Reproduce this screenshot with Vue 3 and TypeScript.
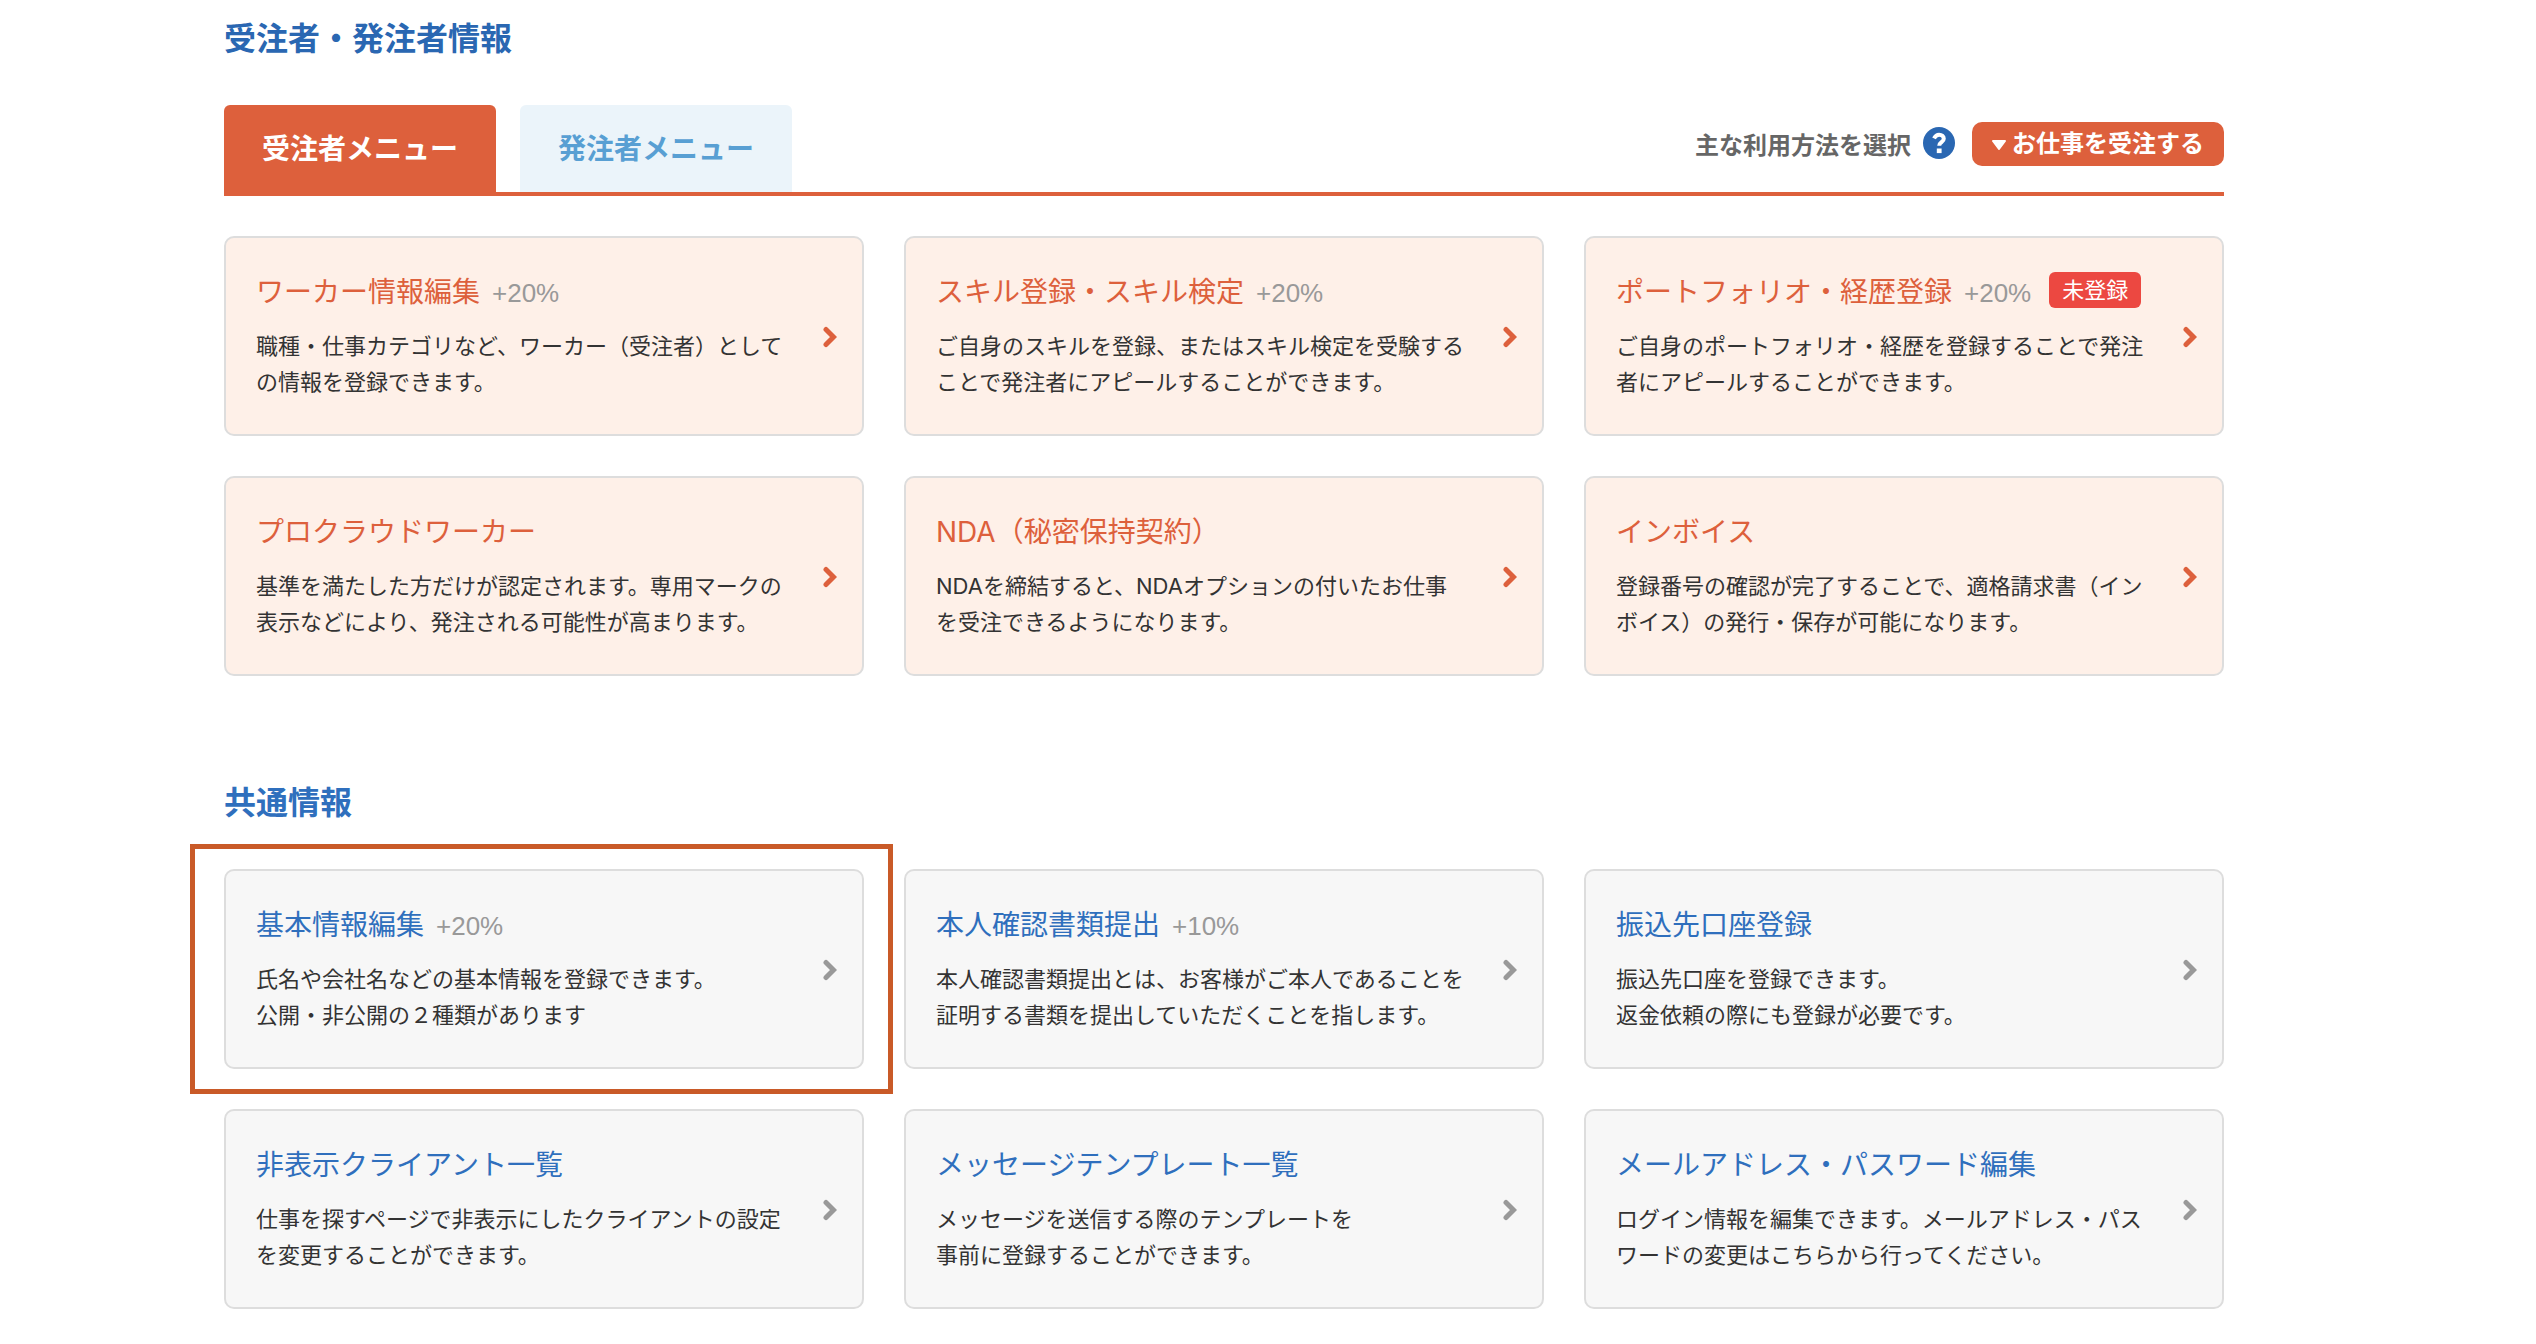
<script setup lang="ts">
import { ref } from 'vue'

interface MenuItem {
  title: string
  lines: string[]
  bonus?: string
  badge?: string
  highlighted?: boolean
}

interface MenuGroup {
  id: string
  items: MenuItem[]
}

const activeTab = ref('worker')
const usage = ref('receive')

const tabs = [
  { id: 'worker', label: '受注者メニュー' },
  { id: 'client', label: '発注者メニュー' },
]

const workerMenu: MenuGroup = {
  id: 'worker',
  items: [
    {
      title: 'ワーカー情報編集',
      bonus: '+20%',
      lines: ['職種・仕事カテゴリなど、ワーカー（受注者）として', 'の情報を登録できます。'],
    },
    {
      title: 'スキル登録・スキル検定',
      bonus: '+20%',
      lines: ['ご自身のスキルを登録、またはスキル検定を受験する', 'ことで発注者にアピールすることができます。'],
    },
    {
      title: 'ポートフォリオ・経歴登録',
      bonus: '+20%',
      badge: '未登録',
      lines: ['ご自身のポートフォリオ・経歴を登録することで発注', '者にアピールすることができます。'],
    },
    {
      title: 'プロクラウドワーカー',
      lines: ['基準を満たした方だけが認定されます。専用マークの', '表示などにより、発注される可能性が高まります。'],
    },
    {
      title: 'NDA（秘密保持契約）',
      lines: ['NDAを締結すると、NDAオプションの付いたお仕事', 'を受注できるようになります。'],
    },
    {
      title: 'インボイス',
      lines: ['登録番号の確認が完了することで、適格請求書（イン', 'ボイス）の発行・保存が可能になります。'],
    },
  ],
}

const commonMenu: MenuGroup = {
  id: 'common',
  items: [
    {
      title: '基本情報編集',
      bonus: '+20%',
      highlighted: true,
      lines: ['氏名や会社名などの基本情報を登録できます。', '公開・非公開の２種類があります'],
    },
    {
      title: '本人確認書類提出',
      bonus: '+10%',
      lines: ['本人確認書類提出とは、お客様がご本人であることを', '証明する書類を提出していただくことを指します。'],
    },
    {
      title: '振込先口座登録',
      lines: ['振込先口座を登録できます。', '返金依頼の際にも登録が必要です。'],
    },
    {
      title: '非表示クライアント一覧',
      lines: ['仕事を探すページで非表示にしたクライアントの設定', 'を変更することができます。'],
    },
    {
      title: 'メッセージテンプレート一覧',
      lines: ['メッセージを送信する際のテンプレートを', '事前に登録することができます。'],
    },
    {
      title: 'メールアドレス・パスワード編集',
      lines: ['ログイン情報を編集できます。メールアドレス・パス', 'ワードの変更はこちらから行ってください。'],
    },
  ],
}

const sections = [
  { heading: '受注者・発注者情報', hasTabs: true, menu: workerMenu },
  { heading: '共通情報', hasTabs: false, menu: commonMenu },
]
</script>

<template>
  <main class="page" lang="ja">
    <section v-for="section in sections" :key="section.menu.id" class="section" :class="section.menu.id">
      <h2 class="heading">{{ section.heading }}</h2>

      <div v-if="section.hasTabs" class="tab-bar">
        <div class="tabs" role="tablist">
          <button
            v-for="tab in tabs"
            :key="tab.id"
            type="button"
            role="tab"
            class="tab"
            :class="{ active: activeTab === tab.id }"
            :aria-selected="activeTab === tab.id"
            @click="activeTab = tab.id"
          >
            {{ tab.label }}
          </button>
        </div>
        <div class="usage">
          <label class="usage-label" for="usage">主な利用方法を選択</label>
          <svg class="help" viewBox="0 0 32 32" aria-hidden="true">
            <circle cx="16" cy="16" r="16" />
            <path class="hook" d="M11 11.400C12.200 9 13.800 7.700 16.100 7.700c2.700 0 4.700 1.600 4.700 4 0 3.400-4.600 3.400-4.600 7" />
            <rect x="13.800" y="21.500" width="4.800" height="4.600" />
          </svg>
          <span class="usage-select">
            <select id="usage" v-model="usage">
              <option value="receive">お仕事を受注する</option>
            </select>
            <svg class="caret" viewBox="0 0 14 10" aria-hidden="true"><path d="M1 1h12L7 9z" /></svg>
          </span>
        </div>
      </div>

      <ul class="cards">
        <li v-for="item in section.menu.items" :key="item.title" class="cell">
          <a class="card" href="#">
            <div class="body">
              <h3 class="title-row">
                <span class="title">{{ item.title }}</span>
                <span v-if="item.bonus" class="bonus">{{ item.bonus }}</span>
                <span v-if="item.badge" class="badge">{{ item.badge }}</span>
              </h3>
              <p class="description">
                <span v-for="line in item.lines" :key="line" class="line">{{ line }}</span>
              </p>
            </div>
            <svg class="chevron" viewBox="0 0 14 22" aria-hidden="true"><path d="M3 3.500l7.500 7.500L3 18.500" /></svg>
          </a>
          <span v-if="item.highlighted" class="highlight" aria-hidden="true"></span>
        </li>
      </ul>
    </section>
  </main>
</template>

<style>
body {
  margin: 0;
  background: #fff;
}
</style>

<style scoped>
.page {
  box-sizing: border-box;
  padding: 15px 312px 35px 224px;
  color: #333;
  font-family: Inter, "Noto Sans CJK JP", sans-serif;
}

.section {
  --accent: #2f6fbd;
  --arrow: #999;
  --card: #f7f7f7;
}

.section.worker {
  --accent: #dd603c;
  --arrow: #dd603c;
  --card: #fef0e8;
}

.section + .section {
  margin-top: 103px;
}

.heading {
  margin: 0;
  color: #2f6fbd;
  font-size: 32px;
  font-weight: 700;
  line-height: 48px;
}

.worker .heading {
  color: #2a67b2;
}

.tab-bar {
  display: flex;
  align-items: flex-end;
  justify-content: space-between;
  margin-top: 42px;
  border-bottom: 4px solid #dd603c;
}

.tabs {
  display: flex;
  gap: 24px;
}

.tab {
  width: 272px;
  height: 87px;
  padding: 0;
  border: 0;
  border-radius: 6px 6px 0 0;
  background: #ebf4fa;
  color: #589fd3;
  font: inherit;
  font-size: 28px;
  font-weight: 700;
  line-height: 42px;
  cursor: pointer;
}

.tab.active {
  background: #dd603c;
  color: #fff;
}

.usage {
  display: flex;
  align-items: center;
  margin-bottom: 26px;
}

.usage-label {
  padding-top: 4px;
  color: #666;
  font-size: 24px;
  font-weight: 700;
  line-height: 40px;
}

.help {
  width: 32px;
  height: 32px;
  margin: 0 17px 2px 12px;
  fill: #2a67b2;
}

.help rect {
  fill: #fff;
}

.help .hook {
  fill: none;
  stroke: #fff;
  stroke-width: 4;
}

.usage-select {
  position: relative;
  display: flex;
}

.usage-select select {
  width: 252px;
  height: 44px;
  padding: 0 20px 0 40px;
  border: 0;
  border-radius: 10px;
  appearance: none;
  background: #dd603c;
  color: #fff;
  font: inherit;
  font-size: 24px;
  font-weight: 700;
  line-height: 44px;
  cursor: pointer;
}

.caret {
  position: absolute;
  top: 18px;
  left: 20px;
  width: 14px;
  height: 10px;
  fill: #fff;
  stroke: #fff;
  stroke-width: 2;
  stroke-linejoin: round;
  pointer-events: none;
}

.cards {
  display: grid;
  grid-template-columns: repeat(3, 1fr);
  gap: 40px;
  margin: 40px 0 0;
  padding: 0;
  list-style: none;
}

.common .cards {
  margin-top: 42px;
}

.cell {
  position: relative;
}

.card {
  box-sizing: border-box;
  display: flex;
  align-items: center;
  justify-content: space-between;
  height: 200px;
  padding: 2px 25px 0 30px;
  border: 2px solid #ddd;
  border-radius: 10px;
  background: var(--card);
  color: inherit;
  text-decoration: none;
}

.title-row {
  display: flex;
  align-items: baseline;
  height: 36px;
  margin: 0;
  font-weight: 400;
  line-height: 36px;
}

.title {
  color: var(--accent);
  font-size: 28px;
}

.bonus {
  margin-left: 12px;
  color: #999;
  font-family: "Liberation Sans", sans-serif;
  font-size: 26px;
}

.badge {
  align-self: flex-start;
  margin: -2px 0 0 18px;
  padding: 0 13px;
  border-radius: 6px;
  background: #ec4841;
  color: #fff;
  font-size: 22px;
}

.description {
  margin: 18px 0 0;
  font-size: 22px;
  line-height: 36px;
}

.line {
  display: block;
  white-space: nowrap;
}

.chevron {
  flex: none;
  width: 14px;
  height: 22px;
  fill: none;
  stroke: var(--arrow);
  stroke-width: 5;
  stroke-linecap: round;
}

.highlight {
  position: absolute;
  inset: -25px -29px -25px -34px;
  border: 5px solid #c95a28;
  pointer-events: none;
}
</style>
